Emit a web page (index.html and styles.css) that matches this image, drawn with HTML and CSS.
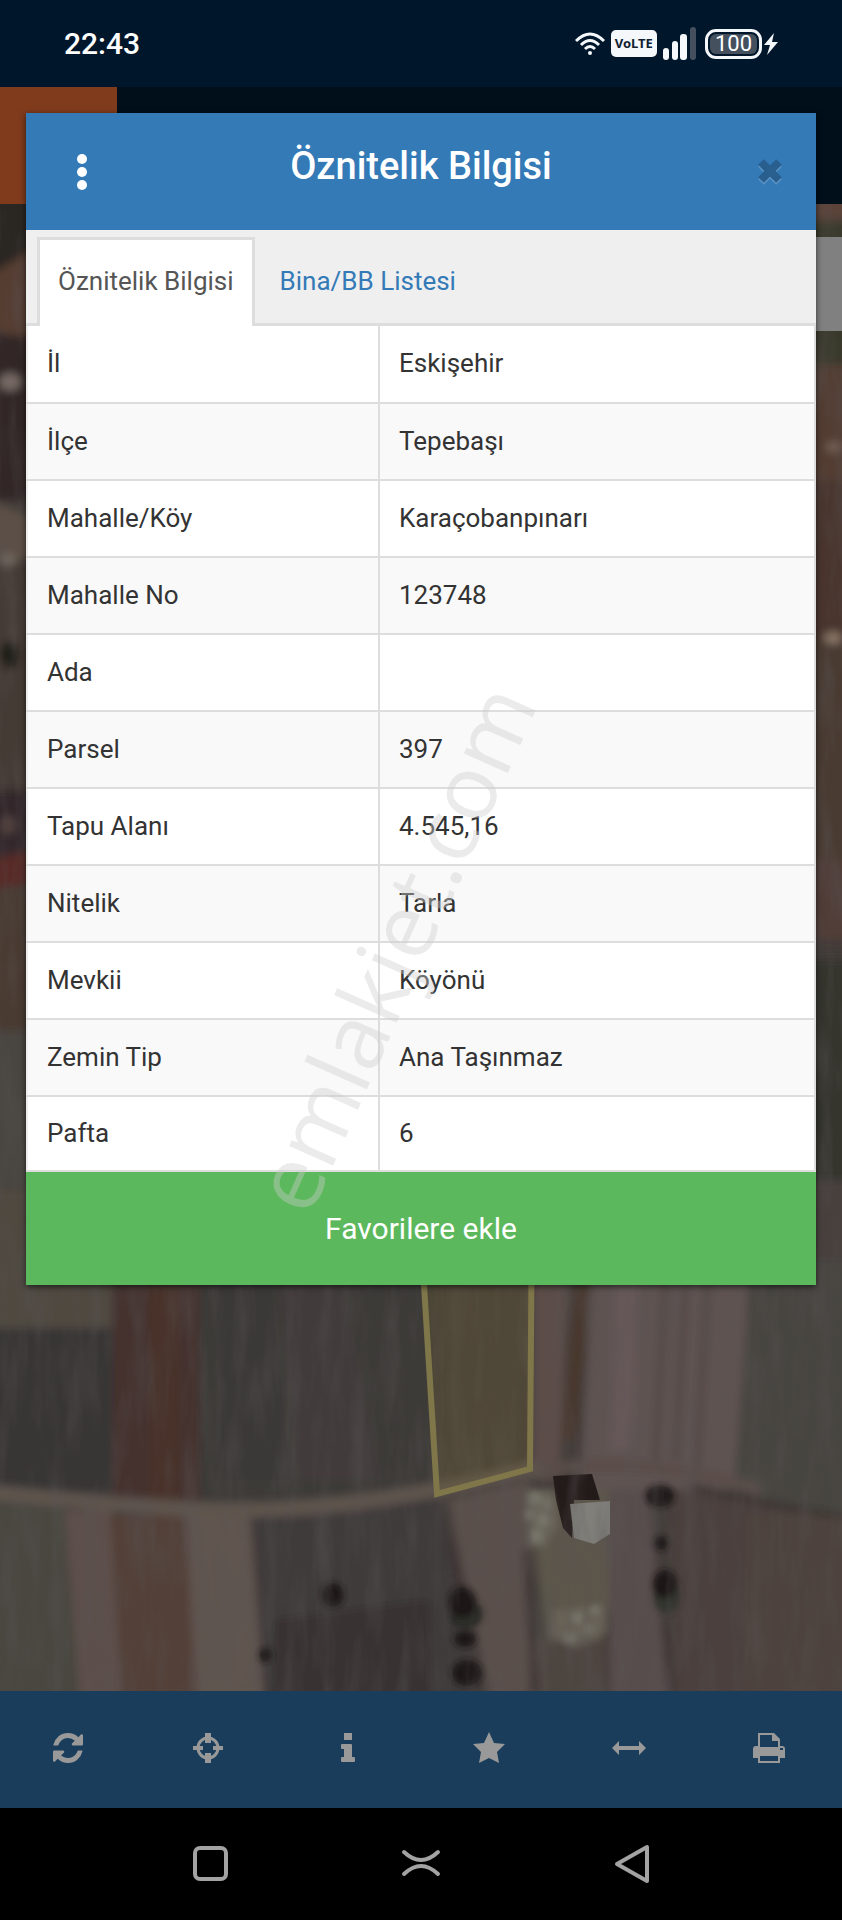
FILE: index.html
```html
<!DOCTYPE html>
<html lang="tr">
<head>
  <meta charset="UTF-8" />
  <meta name="viewport" content="width=device-width, initial-scale=1.0" />
  <title>Öznitelik Bilgisi</title>
  <link rel="stylesheet" href="styles.css">
</head>
<body>
  <header class="status-bar">
    <time class="clock">22:43</time>
    <div class="status-icons">
      <svg class="wifi" viewBox="0 0 30 24" fill="none" stroke="#f4f8fb" stroke-width="3">
        <path d="M1 9 Q15 -5 29 9"/>
        <path d="M6 13 Q15 4 24 13"/>
        <path d="M10 17 Q15 12 20 17"/>
        <circle cx="15" cy="21" r="2" fill="#f4f8fb" stroke="none"/>
      </svg>
      <span class="volte">VoLTE</span>
      <svg class="signal" viewBox="0 0 34 34" fill="#f4f8fb">
        <rect x="0" y="21" width="6" height="12" rx="3"/>
        <rect x="9" y="14" width="6" height="19" rx="3"/>
        <rect x="17" y="7" width="7" height="26" rx="3"/>
        <rect x="27" y="0" width="6" height="33" rx="3" fill="#45505f"/>
      </svg>
      <span class="battery"><span class="level">100</span></span>
      <svg class="bolt" viewBox="0 0 14 22" fill="#f4f8fb"><path d="M10 0 L0 12 H6 L3 22 L14 9 H8 Z"/></svg>
    </div>
  </header>

  <main class="app">
    <div class="top-bar"><div class="brand"></div></div>

    <div class="map">
      <svg viewBox="0 204 842 1487" preserveAspectRatio="xMidYMid slice" aria-hidden="true">
        <defs>
          <filter id="soft" x="-5%" y="-5%" width="110%" height="110%"><feGaussianBlur stdDeviation="4"/></filter>
          <filter id="blob" x="-30%" y="-30%" width="160%" height="160%"><feGaussianBlur stdDeviation="3"/></filter>
          <filter id="soil" x="0" y="0" width="100%" height="100%">
            <feTurbulence type="fractalNoise" baseFrequency="0.06 0.012" numOctaves="3" seed="4"/>
            <feColorMatrix values="0 0 0 0 0.1  0 0 0 0 0.09  0 0 0 0 0.09  2 0 0 0 -0.8"/>
          </filter>
        </defs>
        <rect y="204" width="842" height="1487" fill="#423c39"/>
        <g filter="url(#soft)">
          <!-- left edge -->
          <path fill="#2b2724" d="M-10 190H40V300H-10Z"/>
          <path fill="#573c33" d="M-10 275L40 245V350L-10 325Z"/>
          <path fill="#302625" d="M-10 335H40V500H-10Z"/>
          <path fill="#5b5047" d="M-10 500L40 520V560H-10Z"/>
          <path fill="#443b34" d="M-10 565H40V790H-10Z"/>
          <path fill="#30262a" d="M-10 790H40V860H-10Z"/>
          <path fill="#592720" d="M-10 860L40 848V882L-10 890Z"/>
          <path fill="#4a3a33" d="M-10 890H40V1030H-10Z"/>
          <path fill="#494440" d="M-10 1030H40V1200H-10Z"/>
          <path fill="#504841" d="M-10 1190H112V1330H-10Z"/>
          <ellipse cx="10" cy="382" rx="11" ry="9" fill="#776b65"/>
          <ellipse cx="10" cy="655" rx="10" ry="14" fill="#1f1a18"/>
          <ellipse cx="8" cy="560" rx="8" ry="6" fill="#766d62"/>
          <ellipse cx="8" cy="825" rx="8" ry="10" fill="#51403e"/>
          <!-- right edge -->
          <path fill="#5b4237" d="M800 190H860V235H800Z"/>
          <path fill="#37382c" d="M800 220H860V370H800Z"/>
          <path fill="#533d33" d="M800 365H860V480H800Z"/>
          <path fill="#49352f" d="M800 480H860V640H800Z"/>
          <path fill="#4a3a32" d="M800 640H860V860H800Z"/>
          <path fill="#513c39" d="M800 860H860V940H800Z"/>
          <path fill="#36362f" d="M800 960H860V1180H800Z"/>
          <path fill="#46413e" d="M800 1180H860V1290H800Z"/>
          <ellipse cx="834" cy="447" rx="8" ry="5" fill="#776257"/>
          <ellipse cx="833" cy="638" rx="9" ry="6" fill="#8a7768"/>
          <!-- fields above the road -->
          <path fill="#383434" d="M-10 1328H112V1500H-10Z"/>
          <path fill="#45332f" d="M112 1260H200V1510H112Z"/>
          <path fill="#4a332c" d="M150 1270H178V1500H150Z"/>
          <path fill="#3d3a39" d="M200 1260H437V1505H200Z"/>
          <path fill="#433a3a" d="M280 1290L340 1280L380 1480H300Z"/>
          <path fill="#3a3938" d="M215 1280H270L290 1480H225Z"/>
          <path fill="#5b4d4a" d="M532 1260H570L560 1480H532Z"/>
          <path fill="#49372f" d="M578 1260H592L576 1440H562Z"/>
          <path fill="#5f5351" d="M592 1260H750L738 1490H580Z"/>
          <path fill="#665958" d="M615 1260H640L632 1450H610Z"/>
          <path fill="#47453f" d="M752 1260H860V1520L734 1490Z"/>
          <g fill="none" stroke="#4f4542" stroke-width="5">
            <path d="M666 1270L655 1470"/>
            <path d="M686 1270L676 1460"/>
            <path d="M708 1270L697 1470"/>
          </g>
          <!-- fields below the road -->
          <path fill="#484740" d="M-10 1500H62L80 1700H-10Z"/>
          <path fill="#5d504b" d="M64 1510H112L122 1700H80Z"/>
          <path fill="#524039" d="M110 1515H185L196 1700H122Z"/>
          <path fill="#61544f" d="M185 1515H250L264 1700H196Z"/>
          <path fill="#403a3a" d="M252 1515L440 1500L475 1700H264Z"/>
          <path fill="#383232" d="M275 1620L430 1600V1700H275Z"/>
          <path fill="#5a504b" d="M448 1500L530 1480V1700H490Z"/>
          <path fill="#5b564b" d="M528 1490H610V1600L600 1650L545 1640Z"/>
          <path fill="#4d4440" d="M535 1640H605V1700H535Z"/>
          <path fill="#584e4d" d="M608 1490H650L668 1700H610Z"/>
          <path fill="#4b413c" d="M670 1490L860 1520V1700H676Z"/>
          <path fill="#504440" d="M745 1515H860V1700H745Z" opacity=".6"/>
          <g fill="none" stroke="#3a3130" stroke-width="5">
            <path d="M450 1540L460 1590"/>
            <path d="M525 1550L535 1690"/>
            <path d="M664 1620L672 1695"/>
          </g>
          <path fill="none" stroke="#5f544d" stroke-width="15" d="M-10 1492Q180 1512 250 1510Q380 1508 540 1466"/>
          <path fill="none" stroke="#5a4d4a" stroke-width="12" d="M540 1470Q650 1455 760 1490"/>
          <path fill="none" stroke="#342f2c" stroke-width="4" d="M690 1485L770 1505L850 1517"/>
        </g>
        <g filter="url(#blob)" fill="#1a1615">
          <ellipse cx="333" cy="1595" rx="11" ry="12"/>
          <ellipse cx="266" cy="1655" rx="7" ry="7"/>
          <ellipse cx="465" cy="1614" rx="18" ry="15" fill="#2c2b26"/>
          <ellipse cx="462" cy="1602" rx="14" ry="15"/>
          <ellipse cx="465" cy="1639" rx="11" ry="8"/>
          <ellipse cx="467" cy="1673" rx="15" ry="13"/>
          <ellipse cx="660" cy="1496" rx="14" ry="11"/>
          <ellipse cx="661" cy="1543" rx="7" ry="7"/>
          <ellipse cx="667" cy="1595" rx="13" ry="18" fill="#2f302b"/>
          <ellipse cx="665" cy="1584" rx="12" ry="14"/>
        </g>
        <path fill="#231b1a" d="M553 1476L592 1474L600 1500H574L572 1538L563 1528L556 1500Z"/>
        <path fill="#807f7a" d="M570 1504L610 1501V1534L594 1544L574 1538Z"/>
        <g fill="#77746a" filter="url(#blob)">
          <path d="M526 1492L552 1490L558 1525L546 1546L528 1548Z" opacity=".5"/>
          <path d="M552 1610L603 1604L608 1632L575 1650L550 1636Z" opacity=".4"/>
          <circle cx="535" cy="1498" r="7"/><circle cx="548" cy="1504" r="5"/>
          <circle cx="529" cy="1515" r="5"/><circle cx="544" cy="1520" r="7"/>
          <circle cx="536" cy="1536" r="7"/><circle cx="577" cy="1618" r="6"/>
          <circle cx="595" cy="1610" r="5"/><circle cx="570" cy="1638" r="6"/>
          <circle cx="588" cy="1629" r="5"/>
        </g>
        <rect y="204" width="842" height="1487" filter="url(#soil)" opacity=".4"/>
        <path class="parcel" d="M420 1200L424 1285L437 1494L530 1469L532 1200Z"/>
      </svg>
      <div class="map-tools"></div>
    </div>

    <nav class="toolbar">
      <button type="button" aria-label="Yenile">
        <svg viewBox="0 0 1536 1536"><path d="M1511 928q0 5-1 7-64 268-268 434.500T764 1536q-146 0-282.500-55T238 1324l-129 129q-19 19-45 19t-45-19-19-45V960q0-26 19-45t45-19h448q26 0 45 19t19 45-19 45l-137 137q71 66 161 102t187 36q134 0 250-65t186-179q11-17 53-117 8-23 30-23h192q13 0 22.500 9.500T1511 928zm25-800v448q0 26-19 45t-45 19h-448q-26 0-45-19t-19-45 19-45l138-138Q969 256 768 256q-134 0-250 65T332 500q-11 17-53 117-8 23-30 23H50q-13 0-22.500-9.500T18 608v-7q65-268 270-434.500T768 0q146 0 284 55.500T1297 212l130-129q19-19 45-19t45 19 19 45z"/></svg>
      </button>
      <button type="button" aria-label="Konum">
        <svg viewBox="0 0 30 30"><circle cx="15" cy="15" r="10" fill="none" stroke="currentColor" stroke-width="3"/><path d="M12 0h6v10h-6zM12 20h6v10h-6zM0 13h10v4H0zM20 13h10v4H20z"/></svg>
      </button>
      <button type="button" aria-label="Bilgi">
        <svg viewBox="0 0 30 30"><path d="M11 0h8v7h-8zM9 11h9q1 0 1 1v12h2q1 0 1 1v3q0 1-1 1H9q-1 0-1-1v-3q0-1 1-1h2v-8H9q-1 0-1-1v-3q0-1 1-1z"/></svg>
      </button>
      <button type="button" aria-label="Favoriler">
        <svg class="wide" viewBox="0 0 34 32"><path d="M17 0L22 11L33 12L25 20L27 31L17 26L7 31L9 20L1 12L12 11Z"/></svg>
      </button>
      <button type="button" aria-label="Ölç">
        <svg class="wide" viewBox="0 0 34 32"><path d="M0 16L7 9V14H27V9L34 16L27 23V18H7V23Z"/></svg>
      </button>
      <button type="button" aria-label="Yazdır">
        <svg class="wide" viewBox="0 0 34 32"><path fill-rule="evenodd" d="M6 1H22L28 7V14H30Q33 14 33 17V26H28V31H6V26H1V17Q1 14 4 14H6ZM8 3V15H26V9H20V3ZM8 24V29H26V24ZM28 16V18H31V16Z"/></svg>
      </button>
    </nav>

    <section class="modal" role="dialog" aria-labelledby="modalTitle">
      <div class="modal-header">
        <button type="button" class="menu-btn" aria-label="Menü">
          <svg viewBox="0 0 10 36" fill="#fff"><circle cx="5" cy="5" r="5"/><circle cx="5" cy="18" r="5"/><circle cx="5" cy="31" r="5"/></svg>
        </button>
        <h1 id="modalTitle">Öznitelik Bilgisi</h1>
        <button type="button" class="close-btn" aria-label="Kapat">
          <svg viewBox="0 0 28 29"><path class="close-light" d="M5 7L23 25M23 7L5 25"/><path class="close-dark" d="M5 5L23 23M23 5L5 23"/></svg>
        </button>
      </div>
      <div class="tabs">
        <a href="#oznitelik" class="tab active">Öznitelik Bilgisi</a>
        <a href="#bina" class="tab">Bina/BB Listesi</a>
      </div>
      <table class="attributes" id="oznitelik">
        <tbody>
          <tr><th scope="row">İl</th><td>Eskişehir</td></tr>
          <tr><th scope="row">İlçe</th><td>Tepebaşı</td></tr>
          <tr><th scope="row">Mahalle/Köy</th><td>Karaçobanpınarı</td></tr>
          <tr><th scope="row">Mahalle No</th><td>123748</td></tr>
          <tr><th scope="row">Ada</th><td></td></tr>
          <tr><th scope="row">Parsel</th><td>397</td></tr>
          <tr><th scope="row">Tapu Alanı</th><td>4.545,16</td></tr>
          <tr><th scope="row">Nitelik</th><td>Tarla</td></tr>
          <tr><th scope="row">Mevkii</th><td>Köyönü</td></tr>
          <tr><th scope="row">Zemin Tip</th><td>Ana Taşınmaz</td></tr>
          <tr><th scope="row">Pafta</th><td>6</td></tr>
        </tbody>
      </table>
      <button type="button" class="favorite">Favorilere ekle</button>
      <div class="watermark">emlakjet.com</div>
    </section>
  </main>

  <nav class="system-nav">
    <button type="button" aria-label="Son uygulamalar">
      <svg viewBox="0 0 36 40"><rect x="2" y="4" width="31" height="31" rx="5"/></svg>
    </button>
    <button type="button" aria-label="Ana ekran">
      <svg class="home" viewBox="0 0 40 40"><path d="M3 8Q20 24 37 8M3 30Q20 14 37 30"/></svg>
    </button>
    <button type="button" aria-label="Geri">
      <svg viewBox="0 0 36 40"><path d="M33 3V37L3 20Z"/></svg>
    </button>
  </nav>
</body>
</html>
```

FILE: styles.css
```css
:root {
  --status: #00162b;
  --primary: #337ab7;
  --toolbar: #193d5b;
  --green: #5cb85c;
  --border: #ddd;
  --text: #333;
  --icon: #999;
  --font: Roboto, 'Liberation Sans', sans-serif;
}
* { box-sizing: border-box; margin: 0; padding: 0; }
body {
  display: flex;
  flex-direction: column;
  min-height: 100vh;
  background: #000;
  color: var(--text);
  font-family: var(--font);
}
button { border: none; background: none; font-family: inherit; cursor: pointer; }
svg { display: block; }

/* phone status bar */
.status-bar {
  display: flex;
  align-items: center;
  justify-content: space-between;
  height: 87px;
  padding: 0 64px;
  background: var(--status);
  color: #fff;
}
.clock { font-size: 30px; font-weight: 500; }
.status-icons { display: flex; align-items: center; gap: 6px; }
.wifi { width: 30px; height: 24px; }
.volte {
  padding: 0 4px;
  border-radius: 5px;
  background: #f4f8fb;
  color: #10202f;
  font: 700 13px/27px 'Noto Sans', sans-serif;
}
.signal { width: 34px; height: 34px; }
.battery {
  display: flex;
  padding: 2px;
  margin-left: 2px;
  border: 3px solid #f4f8fb;
  border-radius: 11px;
}
.level {
  padding: 0 5px;
  border-radius: 6px;
  background: #45505f;
  font-size: 22px;
  line-height: 20px;
}
.bolt { width: 14px; height: 22px; margin-left: -4px; }

/* map page under the dialog */
.app { position: relative; flex: 1; display: flex; flex-direction: column; }
.top-bar { display: flex; height: 117px; background: #000f1a; }
.brand { width: 117px; background: #7f3b1c; }
.map { position: relative; flex: 1; min-height: 1200px; overflow: hidden; }
.map > svg { position: absolute; width: 100%; height: 100%; }
.parcel { fill: rgba(120, 105, 50, 0.25); stroke: #7f7649; stroke-width: 6; }
.map-tools {
  position: absolute;
  top: 33px;
  right: 0;
  width: 50px;
  height: 94px;
  background: #808080;
}
.toolbar { display: flex; height: 117px; background: var(--toolbar); }
.toolbar button {
  flex: 1;
  display: flex;
  align-items: center;
  justify-content: center;
  padding-right: 5px;
  padding-bottom: 4px;
  color: var(--icon);
}
.toolbar svg { width: 30px; height: 30px; fill: currentColor; }
.toolbar .wide { width: 34px; height: 32px; }

/* dialog */
.modal {
  position: absolute;
  top: 26px;
  left: 26px;
  right: 26px;
  background: #fff;
  box-shadow: 0 2px 6px rgba(0, 0, 0, 0.6);
}
.modal-header {
  display: flex;
  align-items: center;
  justify-content: space-between;
  height: 117px;
  padding: 0 32px;
  background: var(--primary);
}
.modal-header h1 {
  padding-bottom: 12px;
  color: #fff;
  font-size: 38px;
  font-weight: 500;
}
.menu-btn, .close-btn { display: flex; justify-content: center; width: 48px; }
.menu-btn svg { width: 10px; height: 36px; }
.close-btn { justify-content: flex-end; }
.close-btn svg { width: 28px; height: 29px; fill: none; stroke-width: 8; }
.close-light { stroke: #5d94c4; }
.close-dark { stroke: #285f8f; }
.tabs {
  display: flex;
  height: 96px;
  padding: 7px 11px 0;
  border-bottom: 3px solid var(--border);
  background: #efefef;
}
.tab {
  margin-bottom: -3px;
  padding: 0 18px;
  border: 3px solid transparent;
  border-bottom: none;
  color: var(--primary);
  font-size: 26px;
  line-height: 82px;
  text-decoration: none;
}
.tab + .tab { margin-left: 4px; }
.active { border-color: var(--border); background: #fff; color: #555; }
.attributes {
  width: 100%;
  border-collapse: collapse;
  table-layout: fixed;
}
.attributes tr:nth-child(even) { background: #f9f9f9; }
.attributes th, .attributes td {
  height: 77px;
  padding: 0 19px 2px;
  border: 2px solid var(--border);
  border-top: none;
  font-size: 26px;
  font-weight: 400;
  line-height: 36px;
  text-align: left;
}
.attributes th { width: 352px; border-left-color: #eee; }
.attributes tr:last-child > * { height: 75px; }
.favorite {
  display: block;
  width: 100%;
  height: 113px;
  background: var(--green);
  color: #fff;
  font-size: 30px;
}
.watermark {
  position: absolute;
  top: 834px;
  left: 366px;
  color: rgba(205, 205, 205, 0.4);
  font: 90px/1 'Open Sans', sans-serif;
  transform: translate(-50%, -50%) rotate(-66deg);
  pointer-events: none;
}

/* system navigation */
.system-nav { display: flex; height: 112px; padding: 0 12.5%; background: #000; }
.system-nav button {
  flex: 1;
  display: flex;
  align-items: center;
  justify-content: center;
}
.system-nav svg {
  width: 36px;
  height: 40px;
  fill: none;
  stroke: #a3a3a3;
  stroke-width: 4;
  stroke-linecap: round;
  stroke-linejoin: round;
}
.system-nav .home { width: 40px; }
```
